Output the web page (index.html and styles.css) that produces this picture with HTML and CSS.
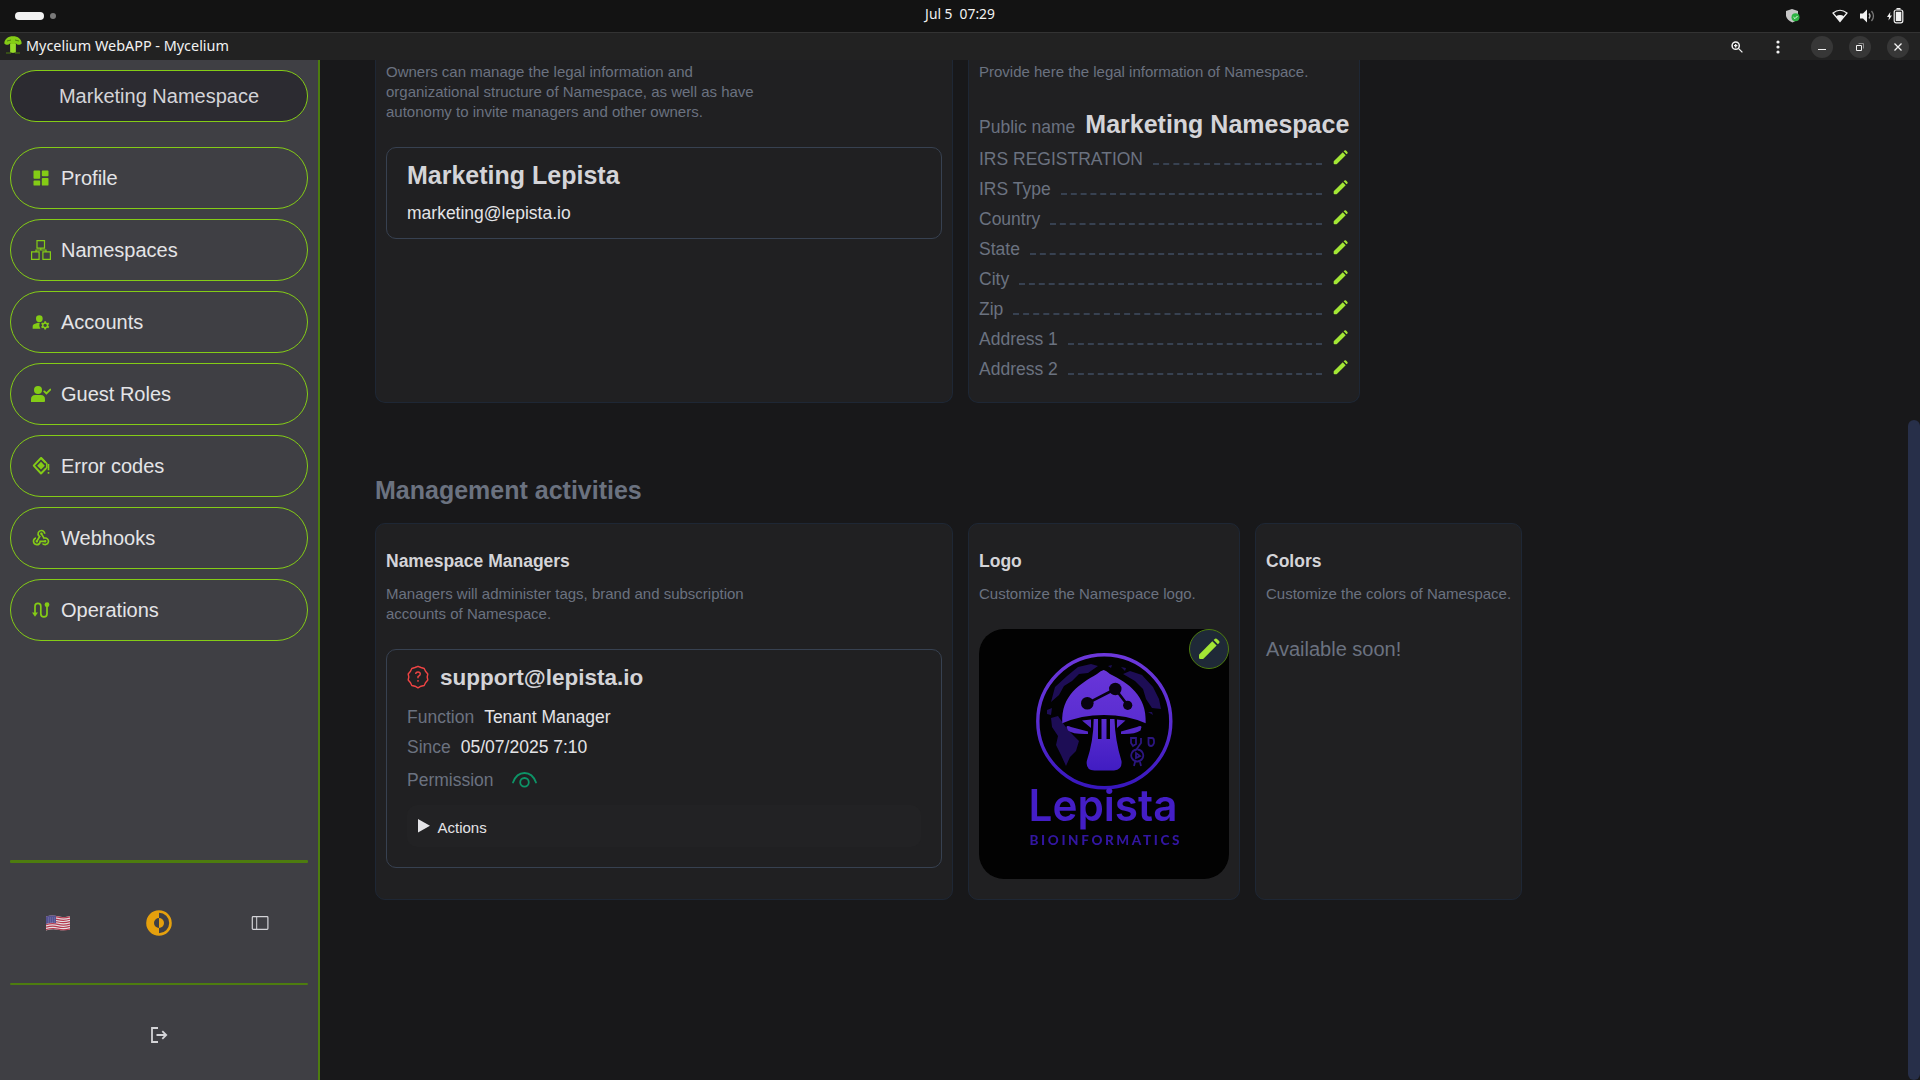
FILE: index.html
```html
<!DOCTYPE html>
<html lang="en">
<head>
<meta charset="utf-8">
<title>Mycelium WebAPP</title>
<link rel="stylesheet" href="styles.css">
</head>
<body>
<svg class="defs" width="0" height="0" aria-hidden="true">
  <symbol id="pencil" viewBox="0 0 22 22">
    <path d="M1.4 16.2 14.3 3.3 18.6 7.6 5.7 20.5Q5.1 21 4.4 21H2.2Q1 21 1 19.8V17.4Q1 16.7 1.4 16.2Z"/>
    <path d="M15.6 2 17 .8Q18 0 19 .9L21.1 3Q22 4 21.2 5L19.9 6.3Z"/>
  </symbol>
</svg>
<header class="topbar">
  <div class="workspaces"><span class="ws-active"></span><span class="ws-dot"></span></div>
  <div class="clock">Jul 5&nbsp; 07:29</div>
  <div class="tray">
    <svg class="shield" width="14" height="16" viewBox="0 0 14 16"><path d="M6 1 12 3V8Q12 12 6.500 14.500 1 12 0 8V3Z" fill="#c6c6c6"/><circle cx="9.500" cy="9.200" r="4" fill="#2fb344"/><path d="M7.500 9.200 9 10.600 11.500 8" fill="none" stroke="#e8ffe8"/></svg>
    <svg class="wifi" width="16" height="14" viewBox="0 0 16 14"><path d="M1 4Q8-1.500 15 4L8 12.500Z" fill="none" stroke="#f2f2f2" stroke-width="1.200"/><path d="M4 7.300Q8 4.800 12 7.300L8 12.500Z" fill="#f2f2f2"/></svg>
    <svg class="volume" width="15" height="14" viewBox="0 0 15 14"><path d="M0 4.500H3L7 .5V13.500L3 9.500H0Z" fill="#f2f2f2"/><path d="M9 4.500Q11 7 9 9.500" fill="none" stroke="#bbb" stroke-width="1.300"/><path d="M11.500 2Q15.500 7 11.500 12" fill="none" stroke="#777" stroke-width="1.300"/></svg>
    <svg class="battery" width="17" height="16" viewBox="0 0 17 16"><path d="M3.300 4 0 9H2L1.500 12.500 5 7.500H3Z" fill="#f2f2f2"/><rect x="7.200" y="2" width="8.600" height="12.800" rx="2" fill="none" stroke="#f2f2f2" stroke-width="1.200"/><rect x="9.500" y="0" width="4" height="1.500" fill="#f2f2f2"/><rect x="8.800" y="3.800" width="5.500" height="9.300" fill="#f2f2f2"/></svg>
  </div>
</header>
<div class="titlebar">
  <svg class="favicon" width="18" height="18" viewBox="0 0 18 18"><path d="M.3 7.500C.5 3 4 .3 9 .3S17.500 3 17.700 7.500C16 9.500 12.500 9 11.800 7L11.500 16.500H6.500L6.200 7C5.500 9 2 9.500.3 7.500Z" fill="#84cc16"/><path d="M7 8V16.500M9 8V17M11 8V16.500" stroke="#a3e635" stroke-width="1.200"/><path d="M2 17H7M11 17H16M3 5 7 4M11 4 15 5" stroke="#4d7c0f" stroke-width="1"/></svg>
  <span class="window-title">Mycelium WebAPP - Mycelium</span>
  <div class="window-tools">
    <svg class="magnifier" width="12" height="12" viewBox="0 0 12 12"><circle cx="4.700" cy="4.700" r="3.600" fill="none" stroke="#f2f2f2" stroke-width="1.500"/><path d="M7.400 7.400 11.400 11.400M3 4.700H6.400M4.700 3V6.400" stroke="#f2f2f2" stroke-width="1.300"/></svg>
    <svg class="dots" width="4" height="14" viewBox="0 0 4 14"><g fill="#f2f2f2"><circle cx="2" cy="2" r="1.600"/><circle cx="2" cy="7" r="1.600"/><circle cx="2" cy="12" r="1.600"/></g></svg>
    <span class="win-btn"><svg width="10" height="10" viewBox="0 0 10 10"><path d="M1 7.500H9" stroke="#f2f2f2"/></svg></span>
    <span class="win-btn"><svg width="10" height="10" viewBox="0 0 10 10"><path d="M1.500 3.500H6.500V8.500H1.500Z" fill="none" stroke="#f2f2f2"/><path d="M3.500 1.500H8.500V6.500" fill="none" stroke="#8a8a8a"/></svg></span>
    <span class="win-btn"><svg width="10" height="10" viewBox="0 0 10 10"><path d="M1.500 1.500 8.500 8.500M8.500 1.500 1.500 8.500" stroke="#f2f2f2" stroke-width="1.300"/></svg></span>
  </div>
</div>
<div class="app">
  <aside class="sidebar">
    <div class="tenant">Marketing Namespace</div>
    <nav class="nav">
      <a class="nav-item"><svg class="nav-icon" viewBox="0 0 24 24"><path d="M4 13h6a1 1 0 0 0 1-1V4a1 1 0 0 0-1-1H4a1 1 0 0 0-1 1v8a1 1 0 0 0 1 1zm-1 7a1 1 0 0 0 1 1h6a1 1 0 0 0 1-1v-4a1 1 0 0 0-1-1H4a1 1 0 0 0-1 1v4zm10 0a1 1 0 0 0 1 1h6a1 1 0 0 0 1-1v-7a1 1 0 0 0-1-1h-6a1 1 0 0 0-1 1v7zm1-10h6a1 1 0 0 0 1-1V4a1 1 0 0 0-1-1h-6a1 1 0 0 0-1 1v5a1 1 0 0 0 1 1z"/></svg>Profile</a>
      <a class="nav-item"><svg class="nav-icon line" viewBox="0 0 20 20"><path d="M6 .600H13.500V8.100H6ZM.600 11.900H8.100V19.400H.600ZM11.900 11.900H19.400V19.400H11.900ZM9.800 8.100V10M5 11.900V10H15V11.900"/></svg>Namespaces</a>
      <a class="nav-item"><svg class="nav-icon" viewBox="0 0 24 24"><circle cx="10" cy="8" r="4"/><path d="M10.670 13.020C10.450 13.010 10.230 13 10 13c-2.420 0-4.680.67-6.610 1.820C2.510 15.340 2 16.320 2 17.350V20h9.260c-.79-1.130-1.260-2.510-1.260-4 0-1.070.25-2.070.67-2.980z"/><path d="M20.750 16c0-.22-.03-.42-.06-.63l1.140-1.010-1-1.730-1.450.49c-.32-.27-.68-.48-1.080-.63L18 11h-2l-.3 1.490c-.4.15-.76.36-1.080.63l-1.450-.49-1 1.730 1.140 1.010c-.03.21-.06.41-.06.63s.03.42.06.63l-1.140 1.010 1 1.730 1.450-.49c.32.27.68.48 1.080.63L16 21h2l.3-1.490c.4-.15.76-.36 1.080-.63l1.450.49 1-1.730-1.140-1.010c.03-.21.06-.41.06-.63zM17 18c-1.100 0-2-.9-2-2s.9-2 2-2 2 .9 2 2-.9 2-2 2z"/></svg>Accounts</a>
      <a class="nav-item"><svg class="nav-icon" viewBox="0 0 20 20"><circle cx="7" cy="6" r="4"/><path d="M0 18V15.500Q0 11 4.200 11H9.800Q14 11 14 15.500V17Q14 18 13 18Z"/><path d="M13.300 7.400 15.400 9.500 19.300 5.600" fill="none" stroke="#84cc16" stroke-width="1.900" stroke-linecap="round"/></svg>Guest Roles</a>
      <a class="nav-item"><svg class="nav-icon" viewBox="0 0 20 20"><path d="M14.800 6.800 10 2 2.700 9.700 10 17.500 14.800 12.700" fill="none" stroke="#84cc16" stroke-width="1.900" stroke-linejoin="round"/><path d="M10 1.500 15.800 7.500V11.500L10 17.500" fill="none" stroke="#84cc16" stroke-width="1.500"/><path d="M10 5.800 13.800 9.700 10 13.600 6.200 9.700Z"/><path d="M16.700 8H18.300V14.200H16.700ZM16.700 16H18.300V17.700H16.700Z"/></svg>Error codes</a>
      <a class="nav-item"><svg class="nav-icon" viewBox="0 0 24 24"><path d="M10 15h5.880c.27-.31.67-.5 1.120-.5.83 0 1.500.67 1.500 1.500s-.67 1.500-1.500 1.500c-.44 0-.84-.19-1.120-.5H11.900A5 5 0 1 1 6 11.100v2.070c-1.160.41-2 1.530-2 2.830 0 1.650 1.350 3 3 3s3-1.350 3-3v-1zm2.500-11c1.650 0 3 1.350 3 3h2c0-2.760-2.240-5-5-5a5.002 5.002 0 0 0-3.450 8.620l-2.350 3.900c-.68.14-1.200.75-1.200 1.480 0 .83.67 1.500 1.500 1.500a1.498 1.498 0 0 0 1.430-1.950l3.380-5.630A2.996 2.996 0 0 1 9.500 7c0-1.650 1.350-3 3-3zm4.500 9c-.64 0-1.230.2-1.720.54l-3.050-5.070C11.530 8.350 11 7.740 11 7c0-.83.67-1.500 1.500-1.500S14 6.170 14 7c0 .15-.02.29-.06.43l2.190 3.650c.28-.05.57-.08.87-.08 2.760 0 5 2.240 5 5s-2.240 5-5 5a5 5 0 0 1-4.330-2.500h2.670c.48.32 1.050.5 1.660.5 1.650 0 3-1.350 3-3s-1.350-3-3-3z"/></svg>Webhooks</a>
      <a class="nav-item"><svg class="nav-icon" viewBox="0 0 20 20"><path d="M4 15V6.200A2.900 2.900 0 0 1 9.800 6.200V13.800A2.900 2.900 0 0 0 16 13.800V6" fill="none" stroke="#84cc16" stroke-width="1.700"/><path d="M1 12.500H7L4 16.800Z"/><circle cx="16" cy="4.700" r="2.400"/></svg>Operations</a>
    </nav>
    <div class="side-foot">
      <hr class="rule thick">
      <div class="prefs">
        <div class="pref"><svg width="24" height="16" viewBox="0 0 24 16"><path d="M0 1.500Q6-.5 12 1.300T24 1V14.500Q18 16 12 14.700T0 15.500Z" fill="#e4dfe2"/><path d="M0 2.500Q6 .5 12 2.200T24 1.800M0 5Q6 3 12 4.600T24 4.200M0 7.400Q6 5.400 12 7T24 6.600M0 9.800Q6 7.800 12 9.400T24 9M0 12.200Q6 10.200 12 11.800T24 11.400M0 14.700Q6 12.700 12 14.100T24 13.800" fill="none" stroke="#b5384e" stroke-width="1.200"/><path d="M0 1.500Q5-.2 10 .8V8.200Q5 7.200 0 9Z" fill="#555291"/><path d="M2 3H9M2 5H9M2 7H9" stroke="#8d8bb8" stroke-width=".7" stroke-dasharray="1 1"/></svg></div>
        <div class="pref"><svg width="26" height="26" viewBox="0 0 26 26"><circle cx="13" cy="13" r="11.500" fill="none" stroke="#e5a00d" stroke-width="2.600"/><path d="M13 1V8A5 5 0 0 0 13 18V25A12 12 0 0 1 13 1Z" fill="#e5a00d"/><path d="M13 8A5 5 0 0 1 13 18Z" fill="#e5a00d"/></svg></div>
        <div class="pref"><svg width="18" height="14" viewBox="0 0 18 14"><rect x="1.300" y=".700" width="15.600" height="12.600" rx=".8" fill="none" stroke="#d4d4d8" stroke-width="1.200"/><path d="M5.700 1V13" stroke="#d4d4d8" stroke-width="1"/></svg></div>
      </div>
      <hr class="rule">
      <div class="logout"><svg width="18" height="16" viewBox="0 0 18 16"><path d="M8 1H2V15H8" fill="none" stroke="#d4d4d8" stroke-width="1.800"/><path d="M6.500 8H16M12.300 4.200 16.200 8 12.300 11.800" fill="none" stroke="#d4d4d8" stroke-width="1.800"/></svg></div>
    </div>
  </aside>
  <main class="main">
    <section class="cards upper">
      <article class="card owners">
        <p class="desc">Owners can manage the legal information and organizational structure of Namespace, as well as have autonomy to invite managers and other owners.</p>
        <div class="panel owner">
          <h2 class="big">Marketing Lepista</h2>
          <p class="value email">marketing@lepista.io</p>
        </div>
      </article>
      <article class="card legal">
        <p class="desc">Provide here the legal information of Namespace.</p>
        <div class="public"><span class="label">Public name</span><h2 class="big">Marketing Namespace</h2></div>
        <div class="fields">
          <div class="field"><span class="label">IRS REGISTRATION</span><i class="dash"></i><svg class="edit"><use href="#pencil"/></svg></div>
          <div class="field"><span class="label">IRS Type</span><i class="dash"></i><svg class="edit"><use href="#pencil"/></svg></div>
          <div class="field"><span class="label">Country</span><i class="dash"></i><svg class="edit"><use href="#pencil"/></svg></div>
          <div class="field"><span class="label">State</span><i class="dash"></i><svg class="edit"><use href="#pencil"/></svg></div>
          <div class="field"><span class="label">City</span><i class="dash"></i><svg class="edit"><use href="#pencil"/></svg></div>
          <div class="field"><span class="label">Zip</span><i class="dash"></i><svg class="edit"><use href="#pencil"/></svg></div>
          <div class="field"><span class="label">Address 1</span><i class="dash"></i><svg class="edit"><use href="#pencil"/></svg></div>
          <div class="field"><span class="label">Address 2</span><i class="dash"></i><svg class="edit"><use href="#pencil"/></svg></div>
        </div>
      </article>
    </section>
    <h2 class="big section-title">Management activities</h2>
    <section class="cards lower">
      <article class="card owners">
        <h3 class="card-title">Namespace Managers</h3>
        <p class="desc">Managers will administer tags, brand and subscription accounts of Namespace.</p>
        <div class="panel manager">
          <div class="who"><svg width="22" height="26" viewBox="0 0 22 26"><path d="M11 1.300 14 2.500 17.200 3.500 18.500 6.300 20.800 9 20.200 12 20.800 15 18.500 17.700 17.200 20.500 14 21.200 11 22.900 8 21.200 4.800 20.500 3.500 17.700 1.200 15 1.800 12 1.200 9 3.500 6.300 4.800 3.500 8 2.500Z" fill="none" stroke="#ef4444" stroke-width="1.400" stroke-linejoin="round"/><path d="M8.700 9Q8.800 7 11 7T13.300 9Q13.300 10.300 11 11.700V13.300M11 15V16.700" fill="none" stroke="#ef4444" stroke-width="1.400"/></svg><h3 class="mail">support@lepista.io</h3></div>
          <div class="pair"><span class="label">Function</span><span class="value">Tenant Manager</span></div>
          <div class="pair"><span class="label">Since</span><span class="value">05/07/2025 7:10</span></div>
          <div class="pair perm"><span class="label">Permission</span><svg width="25" height="16" viewBox="0 0 25 16"><path d="M1 10.500Q4.500 1 12.500 1T24 10.500" fill="none" stroke="#0d9467" stroke-width="1.800" stroke-linecap="round"/><circle cx="12.500" cy="10.300" r="4.300" fill="none" stroke="#0d9467" stroke-width="1.800"/></svg></div>
          <div class="actions"><svg width="12" height="14" viewBox="0 0 12 14"><path d="M0 0 12 6.800 0 13.500Z" fill="#e4e4e7"/></svg>Actions</div>
        </div>
      </article>
      <article class="card logo-card">
        <h3 class="card-title">Logo</h3>
        <p class="desc">Customize the Namespace logo.</p>
        <div class="logo-box">
          <svg class="logo" width="250" height="250" viewBox="0 0 250 250">
            <defs><linearGradient id="violet" gradientUnits="userSpaceOnUse" x1="0" y1="25" x2="0" y2="160"><stop offset="0" stop-color="#6d38dc"/><stop offset=".5" stop-color="#5a2dd0"/><stop offset="1" stop-color="#3716bd"/></linearGradient></defs>
            <g fill="#1d0d55">
              <path d="M72 73 76 58 88 47 99 38 112 35 119 37 109 44 100 45 93 52 85 57 80 66Z"/>
              <path d="M144 45 151 42 163 46 174 58 180 70 182 80 173 79 167 70 164 60 156 52Z"/>
              <path d="M72 89 79 87 86 97 93 105 100 112 97 122 91 128 87 137 82 126 77 116 79 107 73 98Z"/>
              <path d="M68 81 73 79 72 86 68 85ZM169 83 173 83 174 86ZM129 37 133 36 132 39ZM142 38 147 39 146 42Z"/>
            </g>
            <circle cx="125.300" cy="92.200" r="66.500" fill="none" stroke="url(#violet)" stroke-width="3.400"/>
            <path d="M124.700 41Q127 41.500 131 45C149 54 168 66 166.700 94.300Q148 86 125 86T83.300 94.300C82 66 101 55 118 45Q122 41.500 124.700 41Z" fill="url(#violet)"/>
            <path d="M108.300 74.300 136.300 60 148.700 76.300" fill="none" stroke="#08030f" stroke-width="2.600"/>
            <g fill="#08030f"><circle cx="108.300" cy="74.300" r="6.300"/><circle cx="136.300" cy="60" r="6.200"/><circle cx="148.700" cy="76.300" r="4.600"/></g>
            <path d="M87.500 98Q88 96 92 98L109 102.500V105Q94 105.500 89 101.500ZM162.500 98Q162 96 158 98L142 102.500V105Q156 105.500 161.500 101.500ZM103 91.500 112 90.500 112 99ZM146.500 91.500 138 90.500 138 99Z" fill="#5428c8"/>
            <path d="M114.700 90H119V110H122.500V90H127.500V110H131V90H135.500Q136 111 142.500 132Q143.500 141 135 141.500H115.500Q106.500 141 107.800 132Q114.500 112 114.700 90Z" fill="url(#violet)"/>
            <path d="M152 109H157V115L154 117 152 114ZM162 109V114L157 121M169.500 109H173Q175 109 175 112V114Q174 117 172 117Q169.500 117 169.500 114ZM158.500 120.500A6 6 0 1 1 158 120.500M157 124V129L161 127ZM156 133 155 137M161 133 162 137" fill="none" stroke="#2c1680" stroke-width="1.800"/>
            <text class="logo-name" x="49.500" y="192" textLength="149" lengthAdjust="spacingAndGlyphs">Lepista</text>
            <text class="logo-sub" x="50.500" y="216" textLength="150">BIOINFORMATICS</text>
          </svg>
          <span class="logo-edit"><svg width="22" height="22"><use href="#pencil"/></svg></span>
        </div>
      </article>
      <article class="card colors-card">
        <h3 class="card-title">Colors</h3>
        <p class="desc">Customize the colors of Namespace.</p>
        <p class="soon">Available soon!</p>
      </article>
    </section>
  </main>
  <div class="scroll"><div class="thumb"></div></div>
</div>
</body>
</html>
```
FILE: styles.css
```css
* { box-sizing: border-box; margin: 0; padding: 0; }
body { width: 1920px; height: 1080px; overflow: hidden; display: flex; flex-direction: column; background: #18181a; color: #e4e4e7; font-family: "Liberation Sans", Arial, sans-serif; font-size: 17.5px; line-height: 25px; }
svg { display: block; flex: none; }
.defs { position: absolute; }

.topbar { height: 32px; flex: none; background: #131313; display: grid; grid-template-columns: 1fr auto 1fr; align-items: center; }
.workspaces { display: flex; align-items: center; gap: 6px; padding-left: 15px; }
.ws-active { width: 29px; height: 8px; border-radius: 4px; background: #f2f2f2; }
.ws-dot { width: 6px; height: 6px; border-radius: 50%; background: #7a7a7a; }
.clock { font-family: "Noto Sans", sans-serif; font-size: 13.8px; line-height: 28px; padding-bottom: 4px; color: #f2f2f2; white-space: pre; }
.tray { display: flex; align-items: center; justify-content: flex-end; padding-right: 16px; }
.wifi { margin-left: 32px; }
.volume { margin-left: 12px; }
.battery { margin-left: 12px; }

.titlebar { height: 28px; flex: none; border-top: 1px solid #333; background: #222; display: flex; align-items: center; padding: 0 11px 0 4px; }
.favicon { margin-bottom: 4px; }
.window-title { margin-left: 4px; padding-bottom: 2px; font-family: "Noto Sans", sans-serif; font-size: 14.4px; line-height: 25px; color: #f2f2f2; white-space: nowrap; }
.window-tools { margin-left: auto; display: flex; align-items: center; }
.dots { margin-left: 33px; }
.win-btn { width: 22px; height: 22px; margin-left: 16px; border-radius: 50%; background: #373737; display: flex; align-items: center; justify-content: center; }
.dots + .win-btn { margin-left: 31px; }

.app { flex: 1; min-height: 0; display: flex; }
.sidebar { width: 320px; flex: none; background: #3f3f44; border-right: 2px solid #4d7c0f; padding: 10px; display: flex; flex-direction: column; font-size: 20px; line-height: 30px; }
.tenant { height: 52px; border: 1px solid #84cc16; border-radius: 26px; background: #2c2b31; color: #d4d4d8; display: flex; align-items: center; justify-content: center; }
.nav { margin-top: 25px; display: flex; flex-direction: column; gap: 10px; }
.nav-item { height: 62px; border: 1px solid #84cc16; border-radius: 31px; padding-left: 20px; display: flex; align-items: center; gap: 10px; }
.nav-icon { width: 20px; height: 20px; fill: #84cc16; }
.nav-icon.line { fill: none; stroke: #84cc16; stroke-width: 1.2; }
.side-foot { margin-top: auto; height: 210px; display: flex; flex-direction: column; }
.rule { border: 0; height: 2px; border-radius: 1px; background: #4d7c0f; flex: none; }
.rule.thick { height: 3px; }
.prefs { height: 120px; flex: none; display: flex; justify-content: space-between; padding: 0 28px; }
.pref { width: 40px; display: flex; align-items: center; justify-content: center; }
.logout { height: 85px; flex: none; padding-top: 15px; display: flex; align-items: center; justify-content: center; }

.main { flex: 1; padding-left: 55px; }
.cards { display: flex; gap: 15px; }
.card { background: #202022; border: 1px solid #1e2735; border-radius: 10px; padding: 25px 10px 0; }
.upper { height: 343px; }
.upper .card { border-top: 0; border-radius: 0 0 10px 10px; padding-top: 2px; }
.lower { height: 377px; }
.owners { width: 578px; }
.legal { width: 392px; }
.logo-card { width: 272px; }
.colors-card { width: 267px; }
.desc { font-size: 15px; line-height: 20px; color: #6b7280; max-width: 400px; margin-bottom: 25px; }
.logo-card .desc, .colors-card .desc { white-space: nowrap; }
.big { font-size: 25px; line-height: 35px; font-weight: 700; color: #d4d4d8; white-space: nowrap; }
.label { color: #6b7280; white-space: nowrap; }
.value { color: #e4e4e7; }
.panel { border: 1px solid #374151; border-radius: 10px; padding: 10px 20px 0; }
.owner { height: 92px; }
.email { margin-top: 8px; }
.public { display: flex; align-items: baseline; gap: 10px; height: 35px; margin-bottom: 5px; }
.fields { display: flex; flex-direction: column; gap: 5px; }
.field { display: flex; height: 25px; }
.dash { flex: 1; height: 18px; margin: 0 11px 0 10px; border-bottom: 2px dashed #374151; }
.edit { width: 15px; height: 15px; margin: 3px 1px 0 0; fill: #a3e635; }
.section-title.big { margin: 70px 0 15px; color: #6b7280; }
.card-title { font-size: 17.5px; line-height: 25px; color: #d4d4d8; margin-bottom: 10px; }
.manager { height: 219px; }
.who { display: flex; align-items: center; gap: 11px; height: 35px; margin-bottom: 10px; }
.mail { font-size: 22.5px; line-height: 35px; color: #d4d4d8; }
.pair { display: flex; gap: 10px; margin-bottom: 5px; }
.perm { height: 30px; align-items: center; gap: 18px; margin-bottom: 10px; }
.actions { height: 42px; border-radius: 10px; background: #222224; padding: 4px 10px 0; display: flex; align-items: center; gap: 7.5px; font-size: 15px; line-height: 20px; }
.actions svg { margin-bottom: 5px; margin-left: 1px; }
.logo-box { position: relative; width: 250px; height: 250px; border-radius: 25px; background: #020202; }
.logo { filter: blur(.5px); }
.logo-name { font: 600 44px Inter, sans-serif; fill: #441ec6; }
.logo-sub { font: 900 13.500px Lato, sans-serif; fill: #3216a0; }
.logo-edit { position: absolute; top: 0; right: 0; width: 40px; height: 40px; border: 1px solid #4d7c0f; border-radius: 50%; background: #1f2937; fill: #a3e635; display: flex; align-items: center; justify-content: center; }
.soon { font-size: 20px; line-height: 30px; color: #6b7280; padding-top: 5px; }
.scroll { width: 12px; flex: none; padding-top: 360px; }
.thumb { height: 660px; border-radius: 6px; background: #272f49; }
```
